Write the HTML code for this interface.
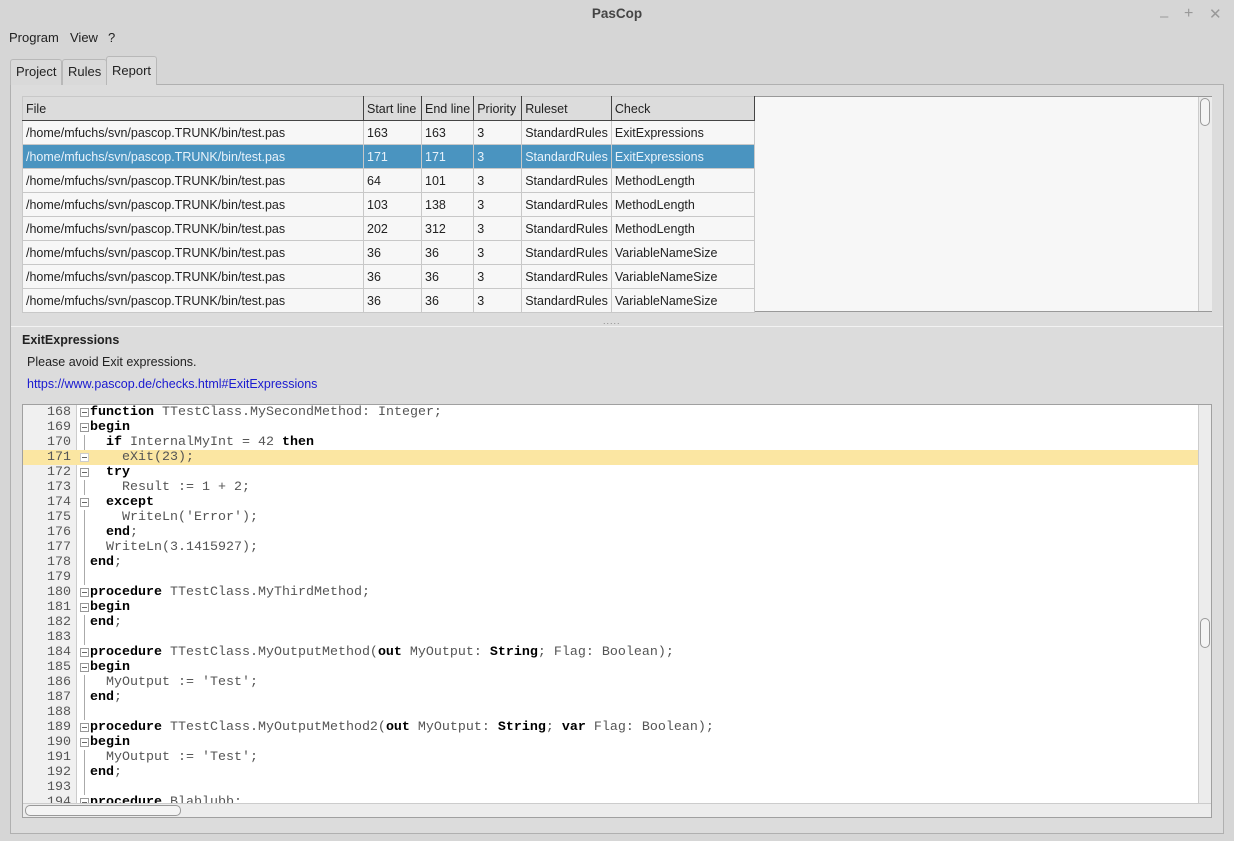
<!DOCTYPE html>
<html><head><meta charset="utf-8"><style>
*{box-sizing:border-box;margin:0;padding:0}
body{width:1234px;height:841px;background:#d6d6d6;font-family:"Liberation Sans",sans-serif;font-size:12.5px;color:#222;position:relative;overflow:hidden}
.abs{position:absolute}
.title{left:0;top:0;width:1234px;height:28px;text-align:center;line-height:28px;font-weight:bold;font-size:13.5px;color:#444}
.menu span{position:absolute;top:30px;font-size:13px}
.tab{position:absolute;top:59px;height:26px;border:1px solid #b8b8b8;border-bottom:none;border-radius:3px 3px 0 0;background:#d9d9d9;line-height:24px;padding:0 5px;font-size:13px}
.panel{left:10px;top:84px;width:1214px;height:750px;border:1px solid #b0b0b0;background:#dcdcdc}
table{border-collapse:collapse;position:absolute;left:22px;top:96px;font-size:12.5px}
td{height:24px;border:1px solid #c8c8c8;padding:0 3px;white-space:nowrap;background:#f7f7f7}
tr.h td{background:#dcdcdc;border-right:1px solid #444;border-bottom:1px solid #444}
tr.s td{background:#4a94c0;color:#e8f2fa;border-top:1px dotted #c04060;border-bottom:1px dotted #c04060}
.code{left:22px;top:404px;width:1190px;height:414px;background:#fff;border:1px solid #a0a0a0;overflow:hidden}
.ln{position:absolute;left:0;height:15px;width:1176px;font-family:"Liberation Mono",monospace;font-size:13.33px;line-height:15px;white-space:pre;color:#555}
.ln .n{display:inline-block;width:48px;text-align:right;color:#555}
.ln .c{position:absolute;left:67px}
.ln b{color:#000}
.fold{position:absolute;left:57px;top:3px;width:9px;height:9px;border:1px solid #999;background:#fff}
.fold:after{content:"";position:absolute;left:1px;top:3px;width:5px;height:1px;background:#666}
.vl{position:absolute;left:61px;top:0;width:1px;height:15px;background:#aaa}
</style></head><body>
<div class="abs title">PasCop</div>
<div class="abs" style="left:1160px;top:8px;color:#999;font-size:15px">–</div>
<div class="abs" style="left:1184px;top:5px;color:#999;font-size:16px">+</div>
<div class="abs" style="left:1209px;top:5px;color:#999;font-size:15px">✕</div>
<div class="menu"><span style="left:9px">Program</span><span style="left:70px">View</span><span style="left:108px">?</span></div>
<div class="abs panel"></div>
<div class="tab" style="left:10px">Project</div>
<div class="tab" style="left:62px">Rules</div>
<div class="tab" style="left:106px;top:56px;height:29px;background:#dcdcdc;line-height:27px">Report</div>
<div class="abs" style="left:22px;top:96px;width:1190px;height:216px;background:#f7f7f7;border:1px solid #999"></div>
<table>
<tr class="h"><td style="width:341px">File</td><td style="width:58px">Start line</td><td style="width:52px">End line</td><td style="width:48px">Priority</td><td style="width:89px">Ruleset</td><td style="width:143px">Check</td></tr>
<tr><td>/home/mfuchs/svn/pascop.TRUNK/bin/test.pas</td><td>163</td><td>163</td><td>3</td><td>StandardRules</td><td>ExitExpressions</td></tr>
<tr class="s"><td>/home/mfuchs/svn/pascop.TRUNK/bin/test.pas</td><td>171</td><td>171</td><td>3</td><td>StandardRules</td><td>ExitExpressions</td></tr>
<tr><td>/home/mfuchs/svn/pascop.TRUNK/bin/test.pas</td><td>64</td><td>101</td><td>3</td><td>StandardRules</td><td>MethodLength</td></tr>
<tr><td>/home/mfuchs/svn/pascop.TRUNK/bin/test.pas</td><td>103</td><td>138</td><td>3</td><td>StandardRules</td><td>MethodLength</td></tr>
<tr><td>/home/mfuchs/svn/pascop.TRUNK/bin/test.pas</td><td>202</td><td>312</td><td>3</td><td>StandardRules</td><td>MethodLength</td></tr>
<tr><td>/home/mfuchs/svn/pascop.TRUNK/bin/test.pas</td><td>36</td><td>36</td><td>3</td><td>StandardRules</td><td>VariableNameSize</td></tr>
<tr><td>/home/mfuchs/svn/pascop.TRUNK/bin/test.pas</td><td>36</td><td>36</td><td>3</td><td>StandardRules</td><td>VariableNameSize</td></tr>
<tr><td>/home/mfuchs/svn/pascop.TRUNK/bin/test.pas</td><td>36</td><td>36</td><td>3</td><td>StandardRules</td><td>VariableNameSize</td></tr>
</table>
<div class="abs" style="left:1198px;top:97px;width:14px;height:214px;background:#ececec;border-left:1px solid #ccc"></div>
<div class="abs" style="left:1200px;top:98px;width:10px;height:28px;border:1px solid #999;border-radius:5px;background:#f4f4f4"></div>
<div class="abs" style="left:603px;top:316px;color:#888;font-size:9px;letter-spacing:1px">.....</div>
<div class="abs" style="left:11px;top:326px;width:1212px;height:507px;border-top:1px solid #f2f2f2;background:#dcdcdc"></div>
<div class="abs" style="left:22px;top:333px;font-weight:bold;font-size:12.5px">ExitExpressions</div>
<div class="abs" style="left:27px;top:355px;font-size:12.5px">Please avoid Exit expressions.</div>
<div class="abs" style="left:27px;top:377px;font-size:12.5px;color:#1a1ad0">https://www.pascop.de/checks.html#ExitExpressions</div>
<div class="abs code">
<div class="abs" style="left:0;top:0;width:54px;height:414px;background:#f0f0f0;border-right:1px solid #ccc"></div>
<div class="abs" style="left:0;top:45px;width:1176px;height:15px;background:#fbe6a2"></div>
<div class="ln" style="top:0"><span class="n">168</span><span class="fold"></span><span class="c"><b>function</b> TTestClass.MySecondMethod: Integer;</span></div>
<div class="ln" style="top:15px"><span class="n">169</span><span class="fold"></span><span class="c"><b>begin</b></span></div>
<div class="ln" style="top:30px"><span class="n">170</span><span class="vl"></span><span class="c">  <b>if</b> InternalMyInt = 42 <b>then</b></span></div>
<div class="ln" style="top:45px"><span class="n">171</span><span class="fold" style="border-color:#ccc"></span><span class="c">    eXit(23);</span></div>
<div class="ln" style="top:60px"><span class="n">172</span><span class="fold"></span><span class="c">  <b>try</b></span></div>
<div class="ln" style="top:75px"><span class="n">173</span><span class="vl"></span><span class="c">    Result := 1 + 2;</span></div>
<div class="ln" style="top:90px"><span class="n">174</span><span class="fold"></span><span class="c">  <b>except</b></span></div>
<div class="ln" style="top:105px"><span class="n">175</span><span class="vl"></span><span class="c">    WriteLn('Error');</span></div>
<div class="ln" style="top:120px"><span class="n">176</span><span class="vl"></span><span class="c">  <b>end</b>;</span></div>
<div class="ln" style="top:135px"><span class="n">177</span><span class="vl"></span><span class="c">  WriteLn(3.1415927);</span></div>
<div class="ln" style="top:150px"><span class="n">178</span><span class="vl"></span><span class="c"><b>end</b>;</span></div>
<div class="ln" style="top:165px"><span class="n">179</span><span class="vl"></span></div>
<div class="ln" style="top:180px"><span class="n">180</span><span class="fold"></span><span class="c"><b>procedure</b> TTestClass.MyThirdMethod;</span></div>
<div class="ln" style="top:195px"><span class="n">181</span><span class="fold"></span><span class="c"><b>begin</b></span></div>
<div class="ln" style="top:210px"><span class="n">182</span><span class="vl"></span><span class="c"><b>end</b>;</span></div>
<div class="ln" style="top:225px"><span class="n">183</span><span class="vl"></span></div>
<div class="ln" style="top:240px"><span class="n">184</span><span class="fold"></span><span class="c"><b>procedure</b> TTestClass.MyOutputMethod(<b>out</b> MyOutput: <b>String</b>; Flag: Boolean);</span></div>
<div class="ln" style="top:255px"><span class="n">185</span><span class="fold"></span><span class="c"><b>begin</b></span></div>
<div class="ln" style="top:270px"><span class="n">186</span><span class="vl"></span><span class="c">  MyOutput := 'Test';</span></div>
<div class="ln" style="top:285px"><span class="n">187</span><span class="vl"></span><span class="c"><b>end</b>;</span></div>
<div class="ln" style="top:300px"><span class="n">188</span><span class="vl"></span></div>
<div class="ln" style="top:315px"><span class="n">189</span><span class="fold"></span><span class="c"><b>procedure</b> TTestClass.MyOutputMethod2(<b>out</b> MyOutput: <b>String</b>; <b>var</b> Flag: Boolean);</span></div>
<div class="ln" style="top:330px"><span class="n">190</span><span class="fold"></span><span class="c"><b>begin</b></span></div>
<div class="ln" style="top:345px"><span class="n">191</span><span class="vl"></span><span class="c">  MyOutput := 'Test';</span></div>
<div class="ln" style="top:360px"><span class="n">192</span><span class="vl"></span><span class="c"><b>end</b>;</span></div>
<div class="ln" style="top:375px"><span class="n">193</span><span class="vl"></span></div>
<div class="ln" style="top:390px"><span class="n">194</span><span class="fold"></span><span class="c"><b>procedure</b> Blablubb;</span></div>
<div class="abs" style="left:1175px;top:0;width:14px;height:399px;background:#ececec;border-left:1px solid #ccc"></div>
<div class="abs" style="left:1177px;top:213px;width:10px;height:30px;border:1px solid #999;border-radius:5px;background:#f4f4f4"></div>
<div class="abs" style="left:0;top:398px;width:1189px;height:15px;background:#ececec;border-top:1px solid #ccc"></div>
<div class="abs" style="left:2px;top:400px;width:156px;height:11px;border:1px solid #999;border-radius:5px;background:#f4f4f4"></div>
</div>
</body></html>
